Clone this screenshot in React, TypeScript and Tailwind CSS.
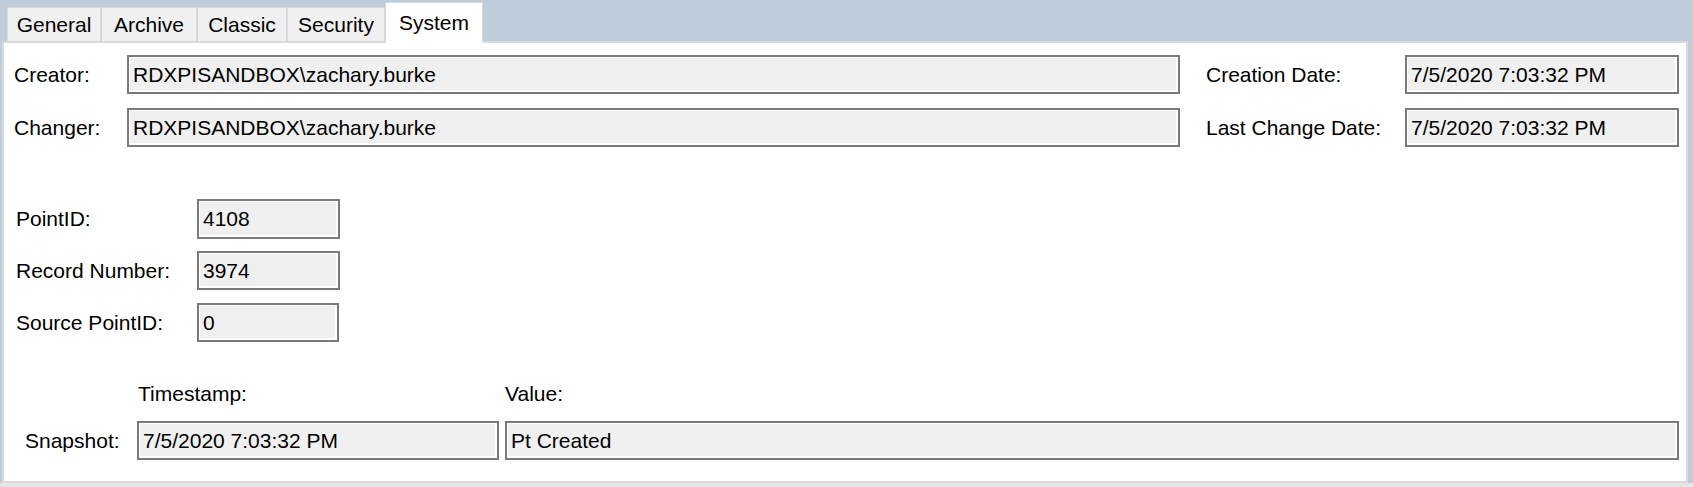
import React from "react";

const tabs = [
  { name: "General", w: "w-[94px]" },
  { name: "Archive", w: "w-[96px]" },
  { name: "Classic", w: "w-[90px]" },
  { name: "Security", w: "w-[98px]" },
];

function Box({ value, className }: { value: string; className: string }) {
  return (
    <div
      className={`flex items-center border-2 border-[#7a7a7a] bg-[#f0f0f0] pl-[4px] shadow-[inset_1px_1px_0_#ffffff,inset_-2px_-2px_0_#ffffff] ${className}`}
    >
      <span className="whitespace-nowrap">{value}</span>
    </div>
  );
}

export default function App() {
  return (
    <div className="flex flex-col w-[1693px] h-[487px] bg-[#e6e6e6] text-black text-[21px] leading-[24px] font-['Liberation_Sans',Arial,sans-serif] overflow-hidden">
      {/* tab strip */}
      <div className="flex items-end h-[41px] pl-[7px] bg-[#bfcddb] shrink-0">
        {tabs.map((t) => (
          <div
            key={t.name}
            className={`flex items-center justify-center h-[34px] ${t.w} bg-[#f0f0f0] border border-b-0 border-[#d9d9d9]`}
          >
            {t.name}
          </div>
        ))}
        <div className="relative z-10 flex justify-center w-[98px] h-[41px] -mb-[2px] pt-[8px] bg-white border border-b-0 border-[#d9d9d9]">
          System
        </div>
      </div>

      {/* page */}
      <div className="flex h-[442px] bg-[#bfcddb] shrink-0">
        <div className="ml-[2px] w-[1686px] h-full flex flex-col border-2 border-[#dadada] bg-white">
          <div className="flex items-center mt-[12px] pl-[10px] h-[39px]">
            <div className="w-[113px]">Creator:</div>
            <Box value="RDXPISANDBOX\zachary.burke" className="w-[1053px] h-[39px]" />
            <div className="w-[199px] ml-[26px]">Creation Date:</div>
            <Box value="7/5/2020 7:03:32 PM" className="w-[274px] h-[39px]" />
          </div>

          <div className="flex items-center mt-[14px] pl-[10px] h-[39px]">
            <div className="w-[113px]">Changer:</div>
            <Box value="RDXPISANDBOX\zachary.burke" className="w-[1053px] h-[39px]" />
            <div className="w-[199px] ml-[26px]">Last Change Date:</div>
            <Box value="7/5/2020 7:03:32 PM" className="w-[274px] h-[39px]" />
          </div>

          <div className="flex items-center mt-[52px] pl-[12px] h-[40px]">
            <div className="w-[181px]">PointID:</div>
            <Box value="4108" className="w-[143px] h-[40px]" />
          </div>

          <div className="flex items-center mt-[12px] pl-[12px] h-[39px]">
            <div className="w-[181px]">Record Number:</div>
            <Box value="3974" className="w-[143px] h-[39px]" />
          </div>

          <div className="flex items-center mt-[13px] pl-[12px] h-[39px]">
            <div className="w-[181px]">Source PointID:</div>
            <Box value="0" className="w-[142px] h-[39px]" />
          </div>

          <div className="flex items-center mt-[40px] h-[24px] pl-[134px]">
            <div className="w-[367px]">Timestamp:</div>
            <div>Value:</div>
          </div>

          <div className="flex items-center mt-[15px] pl-[21px] h-[39px]">
            <div className="w-[112px]">Snapshot:</div>
            <Box value="7/5/2020 7:03:32 PM" className="w-[362px] h-[39px]" />
            <Box value="Pt Created" className="ml-[6px] w-[1174px] h-[39px]" />
          </div>
        </div>
      </div>
    </div>
  );
}
